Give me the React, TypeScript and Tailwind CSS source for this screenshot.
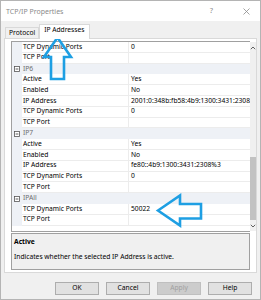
import React from "react";

type Row =
  | { kind: "cat"; name: string }
  | { kind: "item"; name: string; value?: string };

const rows: Row[] = [
  { kind: "item", name: "TCP Dynamic Ports", value: "0" },
  { kind: "item", name: "TCP Port" },
  { kind: "cat", name: "IP6" },
  { kind: "item", name: "Active", value: "Yes" },
  { kind: "item", name: "Enabled", value: "No" },
  { kind: "item", name: "IP Address", value: "2001:0:348b:fb58:4b9:1300:3431:2308" },
  { kind: "item", name: "TCP Dynamic Ports", value: "0" },
  { kind: "item", name: "TCP Port" },
  { kind: "cat", name: "IP7" },
  { kind: "item", name: "Active", value: "Yes" },
  { kind: "item", name: "Enabled", value: "No" },
  { kind: "item", name: "IP Address", value: "fe80::4b9:1300:3431:2308%3" },
  { kind: "item", name: "TCP Dynamic Ports", value: "0" },
  { kind: "item", name: "TCP Port" },
  { kind: "cat", name: "IPAll" },
  { kind: "item", name: "TCP Dynamic Ports", value: "50022" },
  { kind: "item", name: "TCP Port" },
];

export default function App() {
  return (
    <div className="relative w-[261px] h-[300px] bg-[#f0f0f0] border border-[#b4b4b4] flex flex-col font-['Noto_Sans',sans-serif] text-[6.7px] leading-none text-black overflow-hidden">
      {/* title bar */}
      <div className="h-[20px] bg-white flex items-center pl-[5px] text-[7px] text-[#8a8a8a]">
        <span>TCP/IP Properties</span>
        <span className="ml-auto mr-[30px] text-[7.5px]">?</span>
        <svg width="7" height="7" viewBox="0 0 7 7" className="mr-[10px]">
          <path d="M0.5 0.5 L6.5 6.5 M6.5 0.5 L0.5 6.5" stroke="#8a8a8a" strokeWidth="0.8" />
        </svg>
      </div>

      <div className="flex-1 flex flex-col px-[3px]">
        {/* tabs */}
        <div className="h-[17px] flex items-end pl-[1px]">
          <div className="h-[11px] px-[3px] flex items-center border border-b-0 border-[#d9d9d9] bg-[#f0f0f0]">
            Protocol
          </div>
          <div className="relative z-10 h-[15px] -mb-px px-[4px] pb-[3px] flex items-center bg-white border border-b-0 border-[#d9d9d9]">
            IP Addresses
          </div>
        </div>

        {/* tab page */}
        <div className="h-[235px] bg-white border border-[#d9d9d9] px-[6px] pt-[2px] pb-[2px] flex flex-col">
          <div className="h-[191px] border border-[#a0a0a0] flex">
            <div className="flex-1 flex flex-col bg-white">
              {rows.map((r, i) =>
                r.kind === "cat" ? (
                  <div key={i} className="h-[10.8px] flex items-center bg-[#eef1f6] text-[#6d6d6d] shrink-0">
                    <div className="w-[10px] flex justify-center">
                      <svg width="6" height="6" viewBox="0 0 6 6">
                        <rect x="0.5" y="0.5" width="5" height="5" fill="white" stroke="#555" strokeWidth="0.8" />
                        <path d="M1.6 3 H4.4" stroke="#333" strokeWidth="0.8" />
                      </svg>
                    </div>
                    <span className="pl-[1px]">{r.name}</span>
                  </div>
                ) : (
                  <div key={i} className="h-[10.8px] flex shrink-0">
                    <div className="w-[10px] bg-[#eef1f6]" />
                    <div className="w-[107px] flex items-center pl-[1px] border-r border-b border-[#ececec] whitespace-nowrap">
                      {r.name}
                    </div>
                    <div className="flex-1 flex items-center pl-[2px] border-b border-[#ececec] whitespace-nowrap overflow-hidden">
                      {r.value ?? ""}
                    </div>
                  </div>
                )
              )}
            </div>
            {/* scrollbar */}
            <div className="w-[11px] flex flex-col bg-[#f0f0f0]">
              <div className="h-[11px] flex items-center justify-center">
                <svg width="6" height="4" viewBox="0 0 6 4">
                  <path d="M0.8 3.2 L3 1 L5.2 3.2" fill="none" stroke="#606060" strokeWidth="1" />
                </svg>
              </div>
              <div className="flex-1 flex flex-col justify-end">
                <div className="h-[63px] bg-[#c2c2c2]" />
              </div>
              <div className="h-[11px] flex items-center justify-center">
                <svg width="6" height="4" viewBox="0 0 6 4">
                  <path d="M0.8 0.8 L3 3 L5.2 0.8" fill="none" stroke="#606060" strokeWidth="1" />
                </svg>
              </div>
            </div>
          </div>

          <div className="mt-[1px] h-[37px] border border-[#a0a0a0] bg-[#f0f0f0] px-[2px] pt-[5px] flex flex-col gap-[8px]">
            <span className="font-bold">Active</span>
            <span>Indicates whether the selected IP Address is active.</span>
          </div>
        </div>

        {/* buttons */}
        <div className="mt-[9px] flex justify-end gap-[7px] pr-[5px]">
          <div className="w-[44px] h-[13px] flex items-center justify-center bg-[#e1e1e1] border border-[#adadad]">OK</div>
          <div className="w-[44px] h-[13px] flex items-center justify-center bg-[#e1e1e1] border border-[#adadad]">Cancel</div>
          <div className="w-[44px] h-[13px] flex items-center justify-center bg-[#cccccc] border border-[#bfbfbf] text-[#a0a0a0]">Apply</div>
          <div className="w-[44px] h-[13px] flex items-center justify-center bg-[#e1e1e1] border border-[#adadad]">Help</div>
        </div>
      </div>

      {/* annotation arrows */}
      <svg width="261" height="300" viewBox="0 0 261 300" className="absolute left-[-1px] top-[-1px] pointer-events-none">
        <polygon
          points="57.5,37.5 71,57 64,57 64,79 51,79 51,57 44,57"
          fill="none"
          stroke="#1e9fe3"
          strokeWidth="2.6"
          strokeLinejoin="miter"
        />
        <polygon
          points="158,210.5 180,195.5 180,204 201,204 201,218.5 180,218.5 180,225.5"
          fill="none"
          stroke="#1e9fe3"
          strokeWidth="2.6"
          strokeLinejoin="miter"
        />
      </svg>
    </div>
  );
}
